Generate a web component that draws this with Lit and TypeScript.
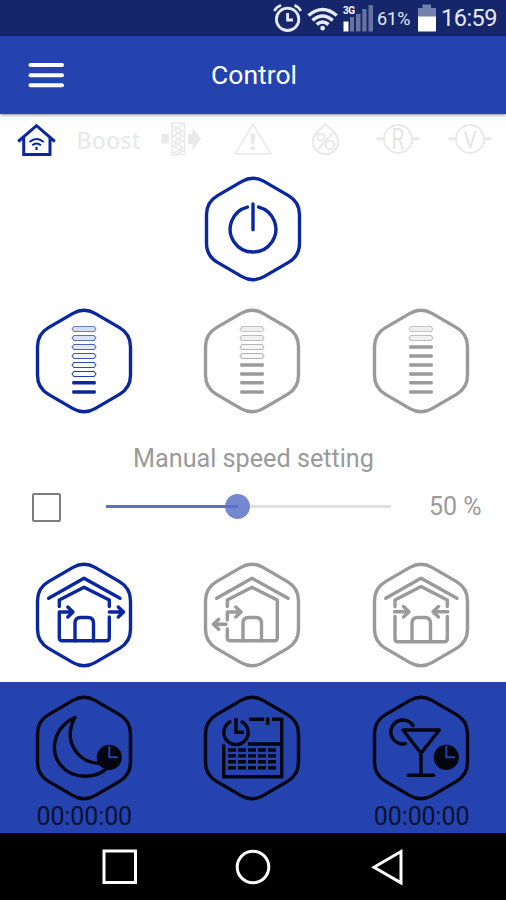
import { LitElement, html, svg, css } from "lit";
import { customElement, property } from "lit/decorators.js";

const HEX =
  "M-46.5-14.3A22 22 0 0 1-35.5-33.4L-11-47.6A22 22 0 0 1 11-47.6L35.5-33.4A22 22 0 0 1 46.5-14.3V14.3A22 22 0 0 1 35.5 33.4L11 47.6A22 22 0 0 1-11 47.6L-35.5 33.4A22 22 0 0 1-46.5 14.3Z";

const BAR_Y = [-32, -23, -14, -5, 4, 13, 21.8, 31];

const speed = (level: number) =>
  BAR_Y.map((y, i) =>
    i >= 8 - level
      ? svg`<rect class="solid" x="-11.8" y=${y - 1.8} width="23.6" height="3.6" rx="1"/>`
      : svg`<g opacity=${0.6 + i * 0.06}><path class="tint" d="M-12 ${y}L-10 ${y - 2.5}H10L12 ${y}L10 ${y + 2.5}H-10Z" fill-opacity=${Math.max(0.02, 0.26 - i * 0.06)}/></g>`
  );

const clock = svg`<circle class="solid" cx="25.3" cy="9.3" r="12.6"/><path class="hands" d="M25.3-2V9.3H33.8"/>`;

const roof = svg`<path d="M-35.3-16.7L0-36.7L36-16.7"/>`;
const door = svg`<path d="M-9 25.7V8.3Q-9 2.5-3.5 2.5H4Q9.5 2.5 9.5 8.3V25.7"/>`;

const GLYPHS: Record<string, unknown> = {
  power: svg`<path d="M-5.6-21.9A22.8 22.8 0 1 0 5.6-21.9M0-25V.8"/>`,
  low: speed(2),
  mid: speed(4),
  high: speed(6),
  through: svg`${roof}${door}<path d="M-24.7-8.5V-15L0-27.7L25.3-15V-8.5M-24.7-3V22.7Q-24.7 25.7-21.7 25.7H22.3Q25.3 25.7 25.3 22.7V2M-24.7-3H-11.2M-16.2-8L-11-3L-16.2 2M25.3-3H39.3M34.3-8L39.5-3L34.3 2"/>`,
  regen: svg`${roof}${door}<path d="M-24.7-8.5V-15L0-27.7L25.3-15V22.7Q25.3 25.7 22.3 25.7H-21.7Q-24.7 25.7-24.7 22.7V14M-24.7-3V5M-24.7-3H-11.2M-16.2-8L-11-3L-16.2 2M-26 9.3H-38.3M-33.3 4.3L-38.6 9.3L-33.3 14.3"/>`,
  intake: svg`${roof}${door}<path d="M-26-8.5V-15L0-28.500L26.3-15V-8.5M-26 1.500V23.7Q-26 26.7-23 26.7H23.3Q26.3 26.7 26.3 23.7V1.500M-26.500-3.3H-12M-17.5-8.500L-12-3.3L-17.5 2M26.800-3.3H12M17.5-8.500L12-3.3L17.5 2"/>`,
  night: svg`<path d="M-9-30.5C-30-21-35 2-23.5 17C-11 32 12 31 24 19.5M-9-30.5C-22-7-6 15 16 15.5"/>${clock}`,
  calendar: svg`<path d="M-20.8-26.8A12.2 12.2 0 1 0-11.2-26.8" stroke-linecap="butt"/>
    <path stroke-linecap="butt" stroke-linejoin="miter" d="M-16-30V-15.7H-8M-2.7-28.7H12.3M15.7-30.5V-23M20-28.7H29.7V28.7H-28.3V-3.5M-4-4H29"/>
    <path stroke-dasharray="8 2" stroke-linecap="butt" d="M-24 2H24M-24 7.9H24M-24 13.8H24M-24 19.7H24"/>`,
  party: svg`<path d="M-18-18H18.3L0 5.3ZM0 5.3V27.3M-12.7 27.3H12.7M-8-22.5A12 12 0 1 0-15.7-4.3"/>${clock}`,
};

@customElement("hex-button")
class HexButton extends LitElement {
  @property() glyph = "power";
  @property({ reflect: true }) tone = "off";

  static styles = css`
    :host { display: block; width: 110px; height: 110px; color: #9a9a9a; }
    :host([tone="on"]) { color: #0a27a0; }
    :host([tone="dark"]) { color: #03050f; }
    svg { display: block; fill: none; stroke: currentColor; stroke-width: 3.4; stroke-linecap: round; stroke-linejoin: round; }
    .solid { fill: currentColor; stroke: none; }
    .tint { fill: currentColor; stroke-width: 1.1; }
    .hands { stroke: #2443ae; stroke-width: 2; stroke-linecap: butt; stroke-linejoin: miter; }
  `;

  render() {
    return html`<svg width="110" height="110" viewBox="-55 -55 110 110">
      <path d=${HEX} />${GLYPHS[this.glyph]}
    </svg>`;
  }
}

@customElement("app-root")
class AppRoot extends LitElement {
  @property({ type: Number }) thumb = 46.2;

  static styles = css`
    :host { display: flex; flex-direction: column; height: 900px; background: #fff; font-family: Roboto, sans-serif; overflow: hidden; }
    svg { display: block; flex: none; }
    .status { display: flex; align-items: center; height: 36px; background: #16266b; color: #e6e9f5; padding-left: 272px; }
    .pct { font-size: 18px; width: 41px; margin-left: 3px; line-height: 36px; padding-top: 1px; box-sizing: border-box; height: 36px; }
    .time { font-size: 23.5px; line-height: 38px; margin-left: 5px; letter-spacing: -0.5px; }
    .header { display: grid; grid-template-columns: 92px 1fr 92px; align-items: center; height: 78px; flex: none; background: #2443ae; color: #fff; box-shadow: 0 1px 3px rgba(30, 30, 60, 0.55); }
    .title { text-align: center; font-size: 26.5px; line-height: 78px; padding-left: 2px; }
    .strip { display: grid; grid-template-columns: repeat(7, 1fr); justify-items: center; align-items: center; height: 50px; flex: none; margin-top: 1px; }
    .strip svg { overflow: visible; fill: none; stroke: #e9e9e9; stroke-width: 2; }
    .strip .home { stroke: #0a27a0; stroke-width: 3; }
    .strip .full { fill: #e9e9e9; stroke: none; }
    .strip text { fill: #e6e6e6; stroke: none; font-family: Roboto, sans-serif; text-anchor: middle; }
    .boost { font: 500 23.5px/50px "Noto Sans", sans-serif; color: #e9e9e9; }
    .row { display: grid; grid-template-columns: repeat(3, 168.7px); justify-items: center; flex: none; margin-left: -0.6px; }
    .first { justify-content: center; grid-template-columns: 110px; margin-top: 9px; margin-left: -1px; }
    .speeds { margin-top: 22px; }
    .label { text-align: center; color: #9a9a9a; font-size: 25.2px; line-height: 36px; margin-top: 25px; margin-bottom: -1px; padding-left: 1px; }
    .manual { display: flex; align-items: center; height: 60px; flex: none; }
    .box { width: 29px; height: 29px; box-sizing: border-box; border: 2.5px solid #7d7d7d; border-radius: 2px; margin: 2px 45px 0 32px; }
    .track { position: relative; width: 285px; height: 3px; background: #dedede; }
    .fill { position: relative; height: 3px; background: #5a71c4; }
    .knob { position: absolute; top: -11px; width: 25px; height: 25px; margin-left: -12.5px; border-radius: 50%; background: #7388cf; }
    .value { color: #9a9a9a; font-size: 25px; margin-left: 38px; line-height: 60px; padding-top: 2px; }
    .modes { margin-top: 24px; }
    .panel { margin-top: 12px; height: 151px; flex: none; background: #2443ae; padding-top: 11px; box-sizing: border-box; }
    .timer { color: #0a1030; font-size: 25px; line-height: 28px; letter-spacing: -0.1px; text-align: center; padding-left: 1px; }
    .nav { display: flex; justify-content: center; align-items: center; gap: 94px; flex: 1; background: #000; }
    .nav svg { fill: none; stroke: #fff; stroke-width: 3; }
  `;

  render() {
    return html`
      <div class="status">
        <svg width="32" height="36" viewBox="272 0 32 36" fill="none" stroke="#e8ebf7" stroke-width="2.8">
          <circle cx="287.6" cy="19.3" r="11.2" />
          <path d="M287.6 13V20H293M274.5 11Q276 7 281 5.2M300.7 11Q299 7 294.5 5.2" />
        </svg>
        <svg width="38" height="36" viewBox="304 0 38 36" fill="none" stroke="#e8ebf7" stroke-width="3.6">
          <path d="M308.5 15.5Q322.5 3.5 336.7 15.5M312.5 20.3Q322.5 11.7 332.7 20.3M316.7 24.5Q322.5 19.5 328.5 24.5" />
          <circle cx="322.6" cy="28.2" r="1.6" stroke-width="1.5" fill="#e8ebf7" />
        </svg>
        <svg width="32" height="36" viewBox="342 0 32 36">
          <path fill="#6672a0" d="M350 17H354V31.5H350ZM356 14H360.5V31.5H356ZM362.3 9H366.5V31.5H362.3ZM368.5 5H373V31.5H368.5Z" />
          <path fill="#fff" d="M343.5 21.5H348.5V31.5H343.5Z" />
          <text x="343" y="13.5" font-size="10" font-weight="700" fill="#fff" textLength="12">3G</text>
        </svg>
        <span class="pct">61%</span>
        <svg width="18" height="36" viewBox="417 0 18 36">
          <path fill="#7480ad" d="M421.5 4.5H430V8H435V17H417V8H421.5Z" />
          <path fill="#fff" d="M417 16.5H435V31.5H417Z" />
        </svg>
        <span class="time">16:59</span>
      </div>
      <div class="header">
        <svg width="92" height="78" viewBox="0 0 92 78" stroke="#fff" stroke-width="4" stroke-linecap="round">
          <path d="M30.5 29H62M30.5 39.2H62M30.5 49.2H62" />
        </svg>
        <span class="title">Control</span>
      </div>
      <div class="strip">
        <svg class="home" width="72" height="50" viewBox="-36 -25 72 50">
          <path d="M-17.8 1.5L.5-14.3L18.8 1.5M-12.3-2V14.5H14V-2" />
          <path stroke-width="1.8" d="M-6.5 2Q.5-4 7.7 2M-3.8 5.3Q.5 1.6 5 5.3" />
          <path stroke-width="2.2" d="M.5 6.8V10" />
        </svg>
        <span class="boost">Boost</span>
        <svg width="72" height="50" viewBox="-36 -25 72 50">
          <path d="M-9-17H3.5V14.5H-9ZM-8-14L2-9L-8-4L2 1L-8 6L2 11L-4 14M2-16L-7-10L2-4L-7 2L2 8L-8 13" stroke-width="1.6" />
          <path class="full" d="M-19.5-6H-12V3.5H-19.5ZM7-6H11.5V-12.5L20-1.3L11.5 10.5V4H7Z" />
        </svg>
        <svg width="72" height="50" viewBox="-36 -25 72 50">
          <path stroke-width="1.5" stroke-linejoin="round" d="M0-15.5L18 13.7H-17.7Z" />
          <path class="full" d="M-3-6.5H2.5L1.2 4.5H-1.7ZM-2.6 6.5H2.1V10H-2.6Z" />
        </svg>
        <svg width="72" height="50" viewBox="-36 -25 72 50">
          <path d="M.5-15.5C5-11.5 13.3-6 13.3 1.5A12.8 12.8 0 0 1-12.3 1.5C-12.3-6-4-11.5.5-15.5Z" />
          <circle cx="-4" cy="-3" r="3.6" /><circle cx="5" cy="5" r="4.3" />
          <path d="M7.5-6.5L-6.5 9" />
        </svg>
        <svg width="72" height="50" viewBox="-36 -25 72 50">
          <circle cx="0" cy="-1" r="14" />
          <path stroke-width="3" d="M-21.5-1.3H-14M14-1.3H21.5" />
          <text transform="translate(0 9) scale(.72 1)" font-size="29">R</text>
        </svg>
        <svg width="72" height="50" viewBox="-36 -25 72 50">
          <circle cx="0" cy="-1" r="14" />
          <path stroke-width="3" d="M-21.5-1.3H-14M14-1.3H21.5" />
          <text transform="translate(0 8.3) scale(.86 1)" font-size="24">V</text>
        </svg>
      </div>
      <div class="row first"><hex-button glyph="power" tone="on"></hex-button></div>
      <div class="row speeds">
        <hex-button glyph="low" tone="on"></hex-button>
        <hex-button glyph="mid"></hex-button>
        <hex-button glyph="high"></hex-button>
      </div>
      <div class="label">Manual speed setting</div>
      <div class="manual">
        <div class="box"></div>
        <div class="track">
          <div class="knob" style="left:${this.thumb}%"></div>
          <div class="fill" style="width:${this.thumb}%"></div>
        </div>
        <span class="value">50 %</span>
      </div>
      <div class="row modes">
        <hex-button glyph="through" tone="on"></hex-button>
        <hex-button glyph="regen"></hex-button>
        <hex-button glyph="intake"></hex-button>
      </div>
      <div class="panel">
        <div class="row">
          <div><hex-button glyph="night" tone="dark"></hex-button><div class="timer">00:00:00</div></div>
          <hex-button glyph="calendar" tone="dark"></hex-button>
          <div><hex-button glyph="party" tone="dark"></hex-button><div class="timer">00:00:00</div></div>
        </div>
      </div>
      <div class="nav">
        <svg width="40" height="40" viewBox="-20 -20 40 40"><path d="M-15-16H16.5V15.5H-15Z" /></svg>
        <svg width="40" height="40" viewBox="-20 -20 40 40"><circle r="15.8" /></svg>
        <svg width="40" height="40" viewBox="-20 -20 40 40"><path d="M-13 .3L14-15.5V15.8Z" /></svg>
      </div>
    `;
  }
}
